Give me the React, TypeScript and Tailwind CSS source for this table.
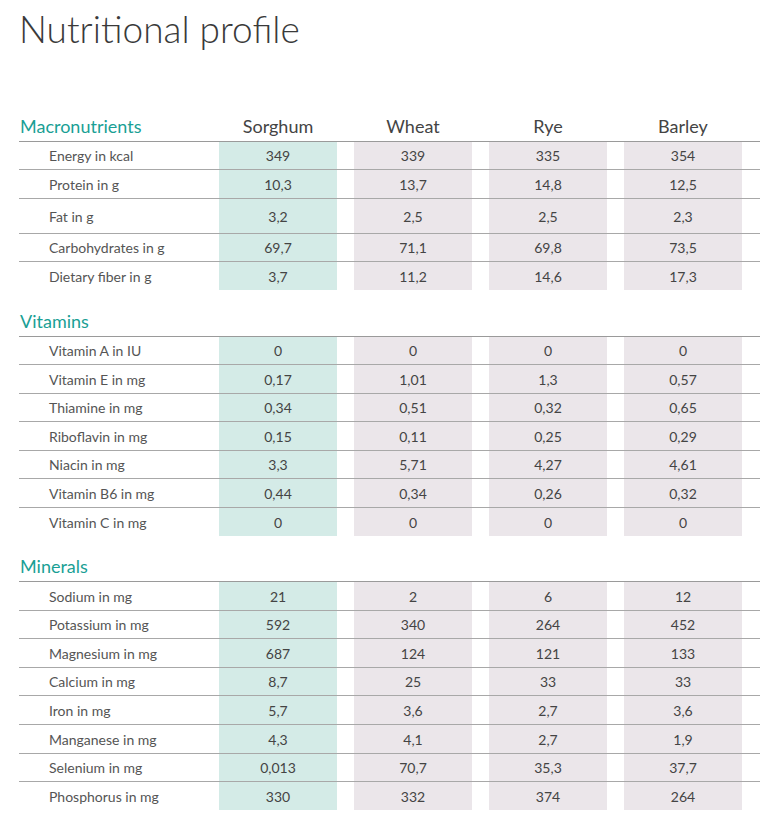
const font = { fontFamily: "Lato, 'Noto Sans', sans-serif" };

type Row = { label: string; values: string[]; h: string };
type Section = { title: string; head: string; showCols: boolean; rows: Row[] };

const cols = ["Sorghum", "Wheat", "Rye", "Barley"];

const sections: Section[] = [
  {
    title: "Macronutrients",
    head: "h-[81px]",
    showCols: true,
    rows: [
      { label: "Energy in kcal", values: ["349", "339", "335", "354"], h: "h-[28px]" },
      { label: "Protein in g", values: ["10,3", "13,7", "14,8", "12,5"], h: "h-[29px]" },
      { label: "Fat in g", values: ["3,2", "2,5", "2,5", "2,3"], h: "h-[35px]" },
      { label: "Carbohydrates in g", values: ["69,7", "71,1", "69,8", "73,5"], h: "h-[28px]" },
      { label: "Dietary fiber in g", values: ["3,7", "11,2", "14,6", "17,3"], h: "h-[29px]" },
    ],
  },
  {
    title: "Vitamins",
    head: "h-[46px]",
    showCols: false,
    rows: [
      { label: "Vitamin A in IU", values: ["0", "0", "0", "0"], h: "h-[28px]" },
      { label: "Vitamin E in mg", values: ["0,17", "1,01", "1,3", "0,57"], h: "h-[29px]" },
      { label: "Thiamine in mg", values: ["0,34", "0,51", "0,32", "0,65"], h: "h-[28px]" },
      { label: "Riboflavin in mg", values: ["0,15", "0,11", "0,25", "0,29"], h: "h-[29px]" },
      { label: "Niacin in mg", values: ["3,3", "5,71", "4,27", "4,61"], h: "h-[28px]" },
      { label: "Vitamin B6 in mg", values: ["0,44", "0,34", "0,26", "0,32"], h: "h-[29px]" },
      { label: "Vitamin C in mg", values: ["0", "0", "0", "0"], h: "h-[29px]" },
    ],
  },
  {
    title: "Minerals",
    head: "h-[45px]",
    showCols: false,
    rows: [
      { label: "Sodium in mg", values: ["21", "2", "6", "12"], h: "h-[29px]" },
      { label: "Potassium in mg", values: ["592", "340", "264", "452"], h: "h-[28px]" },
      { label: "Magnesium in mg", values: ["687", "124", "121", "133"], h: "h-[29px]" },
      { label: "Calcium in mg", values: ["8,7", "25", "33", "33"], h: "h-[28px]" },
      { label: "Iron in mg", values: ["5,7", "3,6", "2,7", "3,6"], h: "h-[29px]" },
      { label: "Manganese in mg", values: ["4,3", "4,1", "2,7", "1,9"], h: "h-[29px]" },
      { label: "Selenium in mg", values: ["0,013", "70,7", "35,3", "37,7"], h: "h-[28px]" },
      { label: "Phosphorus in mg", values: ["330", "332", "374", "264"], h: "h-[29px]" },
    ],
  },
];

function SectionBlock({ s }: { s: Section }) {
  return (
    <div>
      <div className={`grid grid-cols-[183px_118px_118px_118px_118px] gap-x-[17px] items-end pb-[4px] ${s.head}`}>
        <div className="pl-px text-[18px] leading-[22px] text-[#1a9f95]">{s.title}</div>
        {s.showCols &&
          cols.map((c) => (
            <div key={c} className="text-center text-[18px] leading-[22px] text-[#444]">
              {c}
            </div>
          ))}
      </div>
      {s.rows.map((r, i) => (
        <div
          key={r.label}
          className={`grid grid-cols-[183px_118px_118px_118px_118px] gap-x-[17px] w-[741px] ${r.h} ${i === 0 ? "border-t border-[#9a9a9a]" : "border-t border-[#a8a8a8]"}`}
        >
          <div className="flex items-center pl-[30px] text-[14px] text-[#555]">{r.label}</div>
          {r.values.map((v, j) => (
            <div
              key={j}
              className={`flex items-center justify-center text-[14px] text-[#444] ${j === 0 ? "bg-[#d4ebe7]" : "bg-[#ebe6ea]"}`}
            >
              {v}
            </div>
          ))}
        </div>
      ))}
    </div>
  );
}

export default function App() {
  return (
    <div className="w-[781px] h-[822px] bg-white pl-[19px] overflow-hidden" style={font}>
      <div className="h-[60px] pt-[7px]">
        <h1 className="text-[37px] leading-[44px] font-light text-[#3a3a3a]">Nutritional profile</h1>
      </div>
      {sections.map((s) => (
        <SectionBlock key={s.title} s={s} />
      ))}
    </div>
  );
}
